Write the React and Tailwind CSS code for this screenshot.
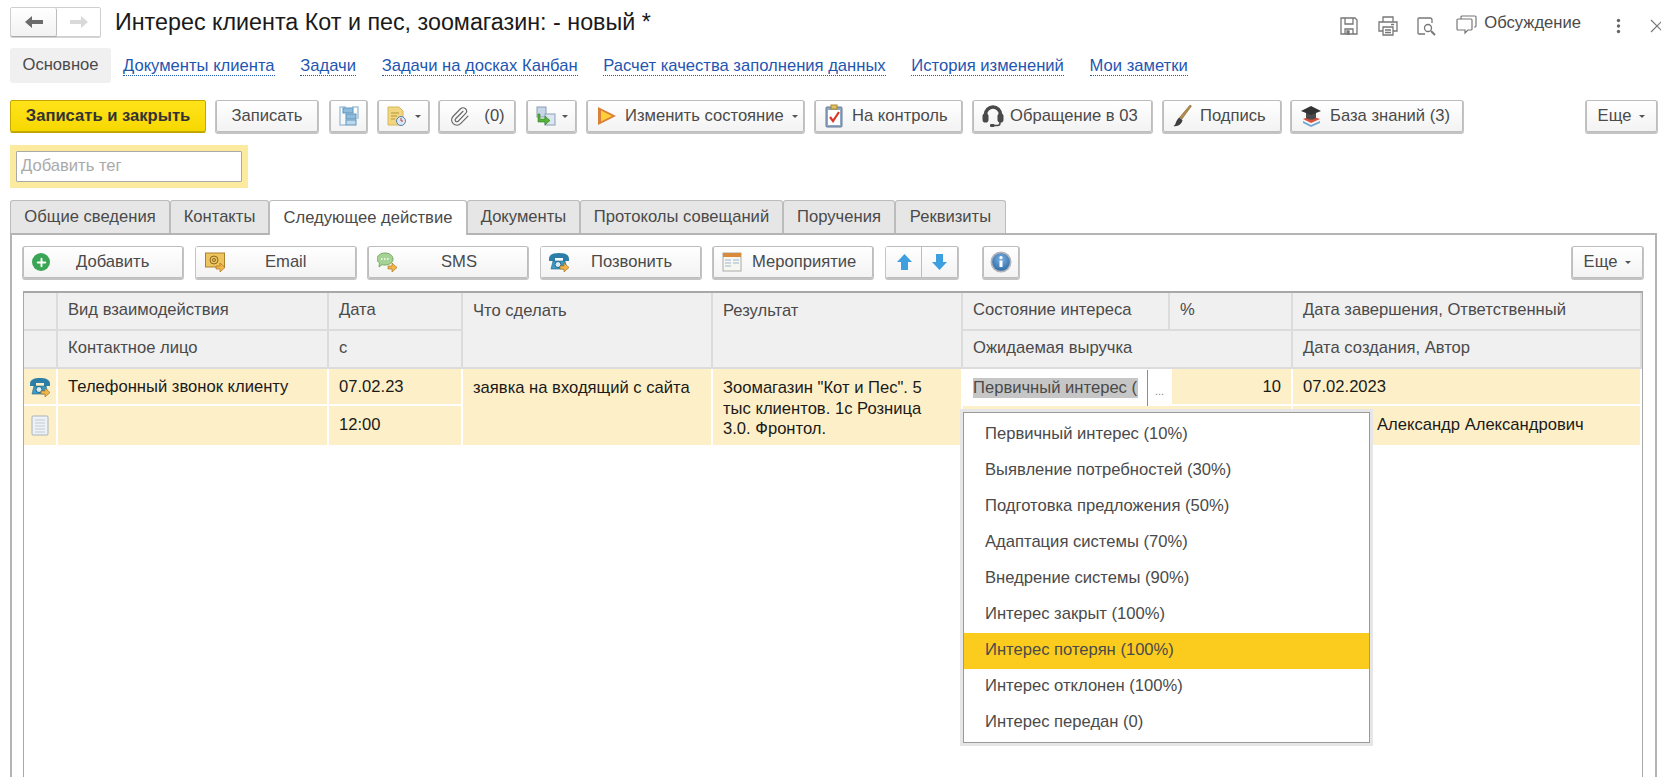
import React from 'react';
import { Plus, Paperclip } from 'lucide-react';

const font = 'font-["Liberation_Sans",Arial,sans-serif]';
const fs = 'text-[16.6px]';

function Btn({ className = '', children }) {
  return (
    <div className={`flex h-8 shrink-0 items-center rounded-[2px] border border-[#bdbdbd] bg-gradient-to-b from-white to-[#f3f3f3] text-[16.6px] leading-none text-[#4a4a4a] shadow-[0_1px_0_1px_#c4c4c4] ${className}`}>
      {children}
    </div>
  );
}

const Caret = () => (
  <span className="inline-block h-0 w-0 border-x-[3px] border-t-[3px] border-x-transparent border-t-[#555]" />
);

const Arrow = () => <path d="M11 14h4v-3l5 4.500-5 4.500v-3h-4z" fill="#f1b54a" stroke="#9a6a16" strokeWidth=".6" />;

const Phone = () => (
  <svg className="shrink-0" width="21" height="20" viewBox="0 0 21 20">
    <path d="M0 7C0 2 5 1 10 1s10 1 10 6v2h-6V6H6v3H0z" fill="#2a7ea8" />
    <path d="M4 9h12l2 8H2z" fill="#3d9bc4" stroke="#1d6488" strokeWidth=".6" />
    <circle cx="9" cy="12.500" r="3" fill="#d8edf6" stroke="#1d6488" />
    <Arrow />
  </svg>
);

const Doc = () => (
  <svg className="shrink-0" width="18" height="21" viewBox="0 0 18 21">
    <rect x="1" y="1" width="16" height="19" rx="1" fill="#eef2f7" stroke="#a7b2c0" />
    <path d="M4 5h10M4 8h10M4 11h10M4 14h10M4 17h10" stroke="#c2cad4" />
  </svg>
);

const Cell = ({ className = '', children }) => <div className={className}>{children}</div>;

const hCell = 'flex items-center border-r-2 border-b-2 border-[#dcdcdc] bg-[#f0f0f0] px-[10px] pb-[1px] text-[16.6px] text-[#4a4a4a]';
const dCell = 'border-r-2 border-b-2 border-white bg-[#fdf0c8] px-[10px] text-[16.6px] text-[#1a1a1a]';
const iconCell = 'flex items-center justify-center border-r-2 border-b-2 border-white bg-[#fdf0c8]';

const menu = [
  'Первичный интерес (10%)',
  'Выявление потребностей (30%)',
  'Подготовка предложения (50%)',
  'Адаптация системы (70%)',
  'Внедрение системы (90%)',
  'Интерес закрыт (100%)',
  'Интерес потерян (100%)',
  'Интерес отклонен (100%)',
  'Интерес передан (0)',
];

export default function App() {
  return (
    <div className={`flex h-[777px] w-[1661px] flex-col overflow-hidden bg-white ${font}`}>
      {/* Title */}
      <div className="flex h-[48px] shrink-0 items-start pl-[10px] pt-[7px]">
        <div className="flex h-[30px] w-[91px] rounded-[2px] border border-[#cfcfcf] shadow-[0_1px_0_0_#d5d5d5]">
          <div className="flex w-[46px] items-center justify-center rounded-[2px] border-r border-[#bdbdbd] bg-gradient-to-b from-white to-[#f2f2f2] shadow-[0_1px_0_0_#aaa]">
            <svg width="18" height="12" viewBox="0 0 18 12"><path d="M0 6l7-6v4h11v4H7v4z" fill="#6b6b6b" /></svg>
          </div>
          <div className="flex flex-1 items-center justify-center">
            <svg width="18" height="12" viewBox="0 0 18 12"><path d="M18 6l-7-6v4H0v4h11v4z" fill="#d9d9d9" /></svg>
          </div>
        </div>
        <div className="ml-[14px] whitespace-nowrap text-[23.3px] leading-[30px] text-[#1a1a1a]">Интерес клиента Кот и пес, зоомагазин: - новый *</div>
        <div className="ml-auto flex items-center pt-[6px]">
          <svg width="20" height="20" viewBox="0 0 20 20" fill="none" stroke="#777" strokeWidth="1.3"><path d="M2 2h14l2 2v14H2z" /><path d="M6 2v6h8V2M6 18v-5h8v5" /><path d="M8 15h2v3H8z" fill="#777" /></svg>
          <svg className="ml-[19px]" width="20" height="20" viewBox="0 0 20 20" fill="none" stroke="#777" strokeWidth="1.3"><path d="M5 6V1h10v5M5 15H1V6h18v9h-4" /><path d="M5 11h10v8H5z" /><path d="M7 14h6M7 16.500h6M13 8.500h3" /></svg>
          <svg className="ml-[18px]" width="20" height="20" viewBox="0 0 20 20" fill="none" stroke="#777" strokeWidth="1.3"><path d="M9 18H3a1 1 0 01-1-1V3a1 1 0 011-1h11a2 2 0 012 2v3" /><circle cx="12" cy="12" r="3.500" /><path d="M15 15l4 4" strokeWidth="2" /></svg>
          <svg className="mb-[3px] ml-[20px]" width="21" height="20" viewBox="0 0 21 20" fill="none" stroke="#777" strokeWidth="1.2"><path d="M5 4V2a1 1 0 011-1h13a1 1 0 011 1v9a1 1 0 01-1 1h-1" /><path d="M2 4h13a1 1 0 011 1v9a1 1 0 01-1 1h-3l-3 3v-3H2a1 1 0 01-1-1V5a1 1 0 011-1z" /></svg>
          <span className="mb-[6px] ml-[7px] text-[16.6px] leading-[20px] text-[#4a4a4a]">Обсуждение</span>
          <svg className="ml-[35px]" width="5" height="16" viewBox="0 0 5 16" fill="#666"><circle cx="2.500" cy="2.500" r="1.700" /><circle cx="2.500" cy="8" r="1.700" /><circle cx="2.500" cy="13.500" r="1.700" /></svg>
          <svg className="ml-[29px] mr-[-3px] shrink-0" width="14" height="14" viewBox="0 0 14 14" stroke="#777" strokeWidth="1.2"><path d="M1 1l12 12M13 1L1 13" /></svg>
        </div>
      </div>

      {/* Nav */}
      <div className={`flex h-[35px] shrink-0 items-center pl-[10px] ${fs}`}>
        <div className="flex h-[35px] w-[101px] items-center justify-center rounded-[3px] bg-[#f0f0f0] text-[#4a4a4a]">Основное</div>
        {[
          ['Документы клиента', 'ml-[12px]'],
          ['Задачи', 'ml-[25.7px]'],
          ['Задачи на досках Канбан', 'ml-[25.7px]'],
          ['Расчет качества заполнения данных', 'ml-[25.7px]'],
          ['История изменений', 'ml-[25.7px]'],
          ['Мои заметки', 'ml-[25.7px]'],
        ].map(([t, c]) => (
          <span key={t} className={`${c} whitespace-nowrap border-b border-dotted border-[#1f56b0] leading-[19px] text-[#1f56b0]`}>{t}</span>
        ))}
      </div>

      {/* Toolbar */}
      <div className="mt-[17px] flex h-[32px] shrink-0 items-center pl-[10px] pr-[4px]">
        <div className="flex h-8 w-[196px] items-center justify-center rounded-[2px] border border-[#c4a800] bg-gradient-to-b from-[#ffe319] to-[#f7d800] text-[16.6px] font-bold text-[#333] shadow-[0_1px_0_0_#bfa600]">Записать и закрыть</div>
        <Btn className="ml-[10px] w-[102px] justify-center">Записать</Btn>
        <Btn className="ml-[12px] w-[37px] justify-center">
          <svg width="20" height="20" viewBox="0 0 20 20">
            <path d="M7 1H1v18h6M13 1h6v12" fill="none" stroke="#a6c4da" strokeWidth="1.500" />
            <rect x="4" y="2" width="10" height="5" fill="#8fbcdc" stroke="#5f95bd" />
            <rect x="7" y="8" width="10" height="5" fill="#8fbcdc" stroke="#5f95bd" />
            <rect x="7" y="14" width="10" height="5" fill="#bcd8ec" stroke="#5f95bd" />
          </svg>
        </Btn>
        <Btn className="ml-[11px] w-[51px] justify-center gap-[8px]">
          <svg width="20" height="20" viewBox="0 0 20 20"><path d="M1 1h11l4 4v14H1z" fill="#f0d680" stroke="#d7b75c" /><path d="M4 7h8M4 10h6M4 13h4" stroke="#b8953a" /><circle cx="14" cy="15" r="4.500" fill="#d9e8f6" stroke="#5c7fa8" /><path d="M14 12v3h2" stroke="#c2402f" fill="none" /></svg>
          <Caret />
        </Btn>
        <Btn className="ml-[10px] w-[76px] justify-center gap-[14px]">
          <Paperclip size={21} strokeWidth={1.3} className="text-[#666]" />
          <span>(0)</span>
        </Btn>
        <Btn className="ml-[12px] w-[49px] justify-center gap-[6px]">
          <svg width="20" height="20" viewBox="0 0 20 20"><rect x="1" y="1" width="9" height="10" fill="#c6d6e6" stroke="#8aa0b6" /><rect x="9" y="8" width="10" height="11" fill="#dbe6f0" stroke="#8aa0b6" /><path d="M4 8v5h5v-3l5 4.500-5 4.500v-3H2V8z" fill="#57b13a" stroke="#2e7f1d" strokeWidth=".6" /></svg>
          <Caret />
        </Btn>
        <Btn className="ml-[11px] w-[217px] pl-[9px]">
          <svg width="20" height="20" viewBox="0 0 20 20"><path d="M1 1l18 9L1 19z" fill="#d9803a" /><path d="M4 4.500L15 10 4 15.500z" fill="#ffcf3a" /></svg>
          <span className="ml-[8px] whitespace-nowrap">Изменить состояние</span>
          <span className="ml-[8px] flex"><Caret /></span>
        </Btn>
        <Btn className="ml-[11px] w-[147px] pl-[8px]">
          <svg width="20" height="24" viewBox="0 0 20 24"><rect x="2" y="3" width="16" height="20" rx="1" fill="#8fa8c4" stroke="#64799a" /><rect x="4" y="6" width="12" height="15" fill="#fff" /><rect x="7" y="1" width="6" height="4" fill="#e0c060" stroke="#a98a30" /><path d="M6 13l3 4 6-9" fill="none" stroke="#d8362a" strokeWidth="2.200" /></svg>
          <span className="ml-[8px] whitespace-nowrap">На контроль</span>
        </Btn>
        <Btn className="ml-[11px] w-[179px] pl-[8px]">
          <svg width="22" height="22" viewBox="0 0 22 22">
            <path d="M3.500 11V9.500a7.500 7.500 0 0115 0V11" fill="none" stroke="#4a4a4a" strokeWidth="3.600" />
            <rect x="0.500" y="8.500" width="6" height="9" rx="2.800" fill="#4a4a4a" />
            <rect x="15.500" y="8.500" width="6" height="9" rx="2.800" fill="#4a4a4a" />
            <path d="M18 16v2a2.500 2.500 0 01-2.500 2.500H11" fill="none" stroke="#4a4a4a" strokeWidth="1.500" />
            <rect x="8" y="19" width="4.500" height="3" rx="1" fill="#4a4a4a" />
          </svg>
          <span className="ml-[6px] whitespace-nowrap">Обращение в 03</span>
        </Btn>
        <Btn className="ml-[11px] w-[118px] pl-[8px]">
          <svg width="20" height="24" viewBox="0 0 20 24"><path d="M18 1l1.500 1L10 15l-2.500-1.500z" fill="#b28a4a" stroke="#7d5c28" strokeWidth=".5" /><path d="M7 13.500L10.500 16c-.5 4-5 7-9 6 2-1 2-3 3-5 .7-1.200 1.500-2.500 2.500-3.500z" fill="#3f3f3f" /></svg>
          <span className="ml-[8px]">Подпись</span>
        </Btn>
        <Btn className="ml-[10px] w-[172px] pl-[8px]">
          <svg width="22" height="24" viewBox="0 0 22 24"><path d="M3 15l8-3 9 3-9 4z" fill="#d94f3d" /><path d="M3 17l8 4 9-4v2l-9 4-8-4z" fill="#6fa6d6" /><path d="M6 8v6c3 2 7 2 10 0V8z" fill="#4a4a4a" /><path d="M1 7l10-5 10 5-10 4z" fill="#333" /></svg>
          <span className="ml-[8px] whitespace-nowrap">База знаний (3)</span>
        </Btn>
        <Btn className="ml-auto w-[71px] justify-center gap-[8px]">
          <span>Еще</span>
          <Caret />
        </Btn>
      </div>

      {/* Tag */}
      <div className="ml-[10px] mt-[13px] flex h-[43px] w-[238px] shrink-0 items-center justify-center bg-[#fceb9e]">
        <div className="flex h-[31px] w-[226px] items-center rounded-[1px] border border-[#a9a9a9] bg-white pl-[4px] text-[16.6px] text-[#aaa]">Добавить тег</div>
      </div>

      {/* Tabs */}
      <div className={`ml-[10px] mt-[12px] flex h-[33px] shrink-0 items-stretch ${fs} text-[#4a4a4a]`}>
        {[
          ['Общие сведения', 'w-[160px]'],
          ['Контакты', 'w-[99px]'],
          ['Следующее действие', 'w-[198px]', true],
          ['Документы', 'w-[113px]'],
          ['Протоколы совещаний', 'w-[203px]'],
          ['Поручения', 'w-[112px]'],
          ['Реквизиты', 'w-[111px]'],
        ].map(([t, w, active]) => (
          <div key={t} className={`${w} flex items-center justify-center whitespace-nowrap rounded-t-[3px] border border-[#bcbcbc] ${active ? 'relative z-10 mb-[-2px] border-b-0 bg-white' : 'border-b-0 bg-[#e6e6e6]'}`}>{t}</div>
        ))}
      </div>

      {/* Panel */}
      <div className="ml-[10px] mr-[4px] flex min-h-0 flex-1 flex-col border-x-2 border-t-2 border-[#b4b4b4] pl-[11px] pr-[12px] pt-[11px]">
        <div className="flex h-8 shrink-0 items-center">
          <Btn className="w-[160px] pl-[8px]">
            <span className="flex h-[18px] w-[18px] shrink-0 items-center justify-center rounded-full bg-[#3aa655]"><Plus size={13} strokeWidth={3.5} className="text-white" /></span>
            <span className="ml-[26px]">Добавить</span>
          </Btn>
          <Btn className="ml-[13px] w-[160px] border-l-transparent pl-[8px]">
            <svg className="shrink-0" width="20" height="20" viewBox="0 0 20 20"><rect x="0.500" y="1" width="19" height="14" fill="#eec45e" stroke="#a9822a" /><circle cx="9" cy="8" r="4" fill="none" stroke="#8a6a22" /><circle cx="9" cy="8" r="1.500" fill="none" stroke="#8a6a22" /><Arrow /></svg>
            <span className="ml-[40px]">Email</span>
          </Btn>
          <Btn className="ml-[12px] w-[160px] pl-[8px]">
            <svg className="shrink-0" width="21" height="20" viewBox="0 0 21 20"><path d="M8 1c4.500 0 8 2.500 8 6s-3.500 6-8 6c-1 0-2 0-3-.4L2 15l.5-4C1 10 0 8.500 0 7c0-3.500 3.500-6 8-6z" fill="#a5d396" stroke="#74aa63" /><path d="M4 7h1.500M7 7h1.500M10 7h1.500" stroke="#fff" strokeWidth="1.500" /><Arrow /></svg>
            <span className="ml-[43px]">SMS</span>
          </Btn>
          <Btn className="ml-[13px] w-[160px] border-l-transparent pl-[7px]">
            <Phone />
            <span className="ml-[21px]">Позвонить</span>
          </Btn>
          <Btn className="ml-[12px] w-[160px] pl-[8px]">
            <svg className="shrink-0" width="20" height="20" viewBox="0 0 20 20"><rect x="1" y="1" width="18" height="18" fill="#f7f7f2" stroke="#aaa" /><rect x="1" y="1" width="18" height="4" fill="#d8893a" /><path d="M3 8h6M3 11h6M3 14h6M11 8h6M11 11h6" stroke="#9fb4cc" /></svg>
            <span className="ml-[10px]">Мероприятие</span>
          </Btn>
          <Btn className="ml-[13px] w-[72px] border-l-transparent">
            <span className="flex h-full w-[35px] items-center justify-center border-r border-[#bdbdbd]">
              <svg width="15" height="16" viewBox="0 0 15 16"><path d="M7.500 0L15 8h-4v8H4V8H0z" fill="#3e9fe0" /></svg>
            </span>
            <span className="flex flex-1 items-center justify-center">
              <svg width="15" height="16" viewBox="0 0 15 16"><path d="M7.500 16L15 8h-4V0H4v8H0z" fill="#3e9fe0" /></svg>
            </span>
          </Btn>
          <Btn className="ml-[25px] w-[36px] justify-center">
            <svg width="22" height="22" viewBox="0 0 22 22">
              <defs>
                <radialGradient id="inf" cx="50%" cy="35%" r="65%"><stop offset="0%" stopColor="#7db3e4" /><stop offset="100%" stopColor="#2f6ca8" /></radialGradient>
              </defs>
              <circle cx="11" cy="11" r="10.500" fill="#b0b4ba" />
              <circle cx="11" cy="11" r="8.800" fill="url(#inf)" />
              <circle cx="11" cy="6.500" r="1.600" fill="#fff" />
              <path d="M9.500 9.500h3V16h-3z" fill="#fff" />
            </svg>
          </Btn>
          <Btn className="ml-auto w-[71px] justify-center gap-[8px]">
            <span>Еще</span>
            <Caret />
          </Btn>
        </div>

        {/* Table */}
        <div className="relative mt-[13px] min-h-0 flex-1 border-x border-t-2 border-[#a8a8a8]">
          <div className="grid grid-cols-[34px_271px_134px_250px_250px_207px_123px_1fr] grid-rows-[38px_38px_37px_41px]">
            <Cell className={hCell} />
            <Cell className={hCell}>Вид взаимодействия</Cell>
            <Cell className={hCell}>Дата</Cell>
            <Cell className={`${hCell} row-span-2 items-start pt-[6px]`}>Что сделать</Cell>
            <Cell className={`${hCell} row-span-2 items-start pt-[6px]`}>Результат</Cell>
            <Cell className={hCell}>Состояние интереса</Cell>
            <Cell className={hCell}>%</Cell>
            <Cell className={`${hCell} border-r-0`}>Дата завершения, Ответственный</Cell>

            <Cell className={hCell} />
            <Cell className={hCell}>Контактное лицо</Cell>
            <Cell className={hCell}>с</Cell>
            <Cell className={`${hCell} col-span-2`}>Ожидаемая выручка</Cell>
            <Cell className={`${hCell} border-r-0`}>Дата создания, Автор</Cell>

            <Cell className={iconCell}><Phone /></Cell>
            <Cell className={`${dCell} flex items-center pt-[2px]`}>Телефонный звонок клиенту</Cell>
            <Cell className={`${dCell} flex items-center pt-[2px]`}>07.02.23</Cell>
            <Cell className={`${dCell} row-span-2 pt-[9px] leading-[20.5px]`}>заявка на входящий с сайта</Cell>
            <Cell className={`${dCell} row-span-2 pt-[9px] leading-[20.5px]`}>Зоомагазин "Кот и Пес". 5 тыс клиентов. 1с Розница 3.0. Фронтол.</Cell>
            <Cell className="flex items-center bg-white pl-[10px]">
              <span className="w-[165px] shrink-0 overflow-hidden whitespace-nowrap bg-[#c6c6c6] text-[16.6px] leading-[20px] text-[#4a4a4a]">Первичный интерес (</span>
              <span className="ml-[9px] h-[36px] border-l border-[#8e8e8e]" />
              <span className="ml-[7px] mt-[8px] text-[11px] leading-none text-[#888]">...</span>
            </Cell>
            <Cell className={`${dCell} flex items-center justify-end border-l-2 border-l-white pt-[2px]`}>10</Cell>
            <Cell className={`${dCell} flex items-center border-r-0 pt-[2px]`}>07.02.2023</Cell>

            <Cell className={iconCell}><Doc /></Cell>
            <Cell className={dCell} />
            <Cell className={`${dCell} flex items-center`}>12:00</Cell>
            <Cell className={`${dCell} col-span-2`} />
            <Cell className={`${dCell} flex items-center whitespace-nowrap border-r-0 pl-[84px]`}>Александр Александрович</Cell>
          </div>

          {/* Dropdown */}
          <div className="absolute left-[939px] top-[119px] z-20 w-[407px] border border-[#9a9a9a] bg-white pb-[1px] pt-[4px] text-[16.6px] text-[#4a4a4a] shadow-[0_0_0_3px_#e6e6e6]">
            {menu.map((m, i) => (
              <div key={m} className={`flex h-[36px] items-center pb-[2px] pl-[21px] ${i === 6 ? 'bg-[#fbcc1e]' : ''}`}>{m}</div>
            ))}
          </div>
        </div>
      </div>
    </div>
  );
}
